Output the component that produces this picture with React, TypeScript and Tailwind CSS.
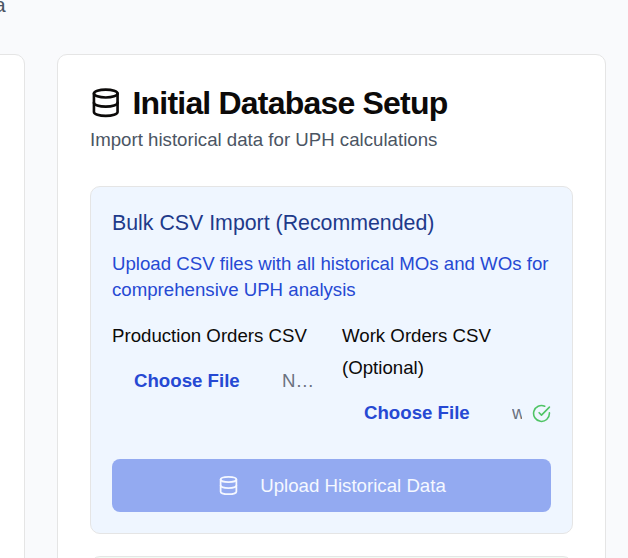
import { Database } from "lucide-react";

function FileField({ name }: { name: string }) {
  return (
    <div className="flex h-[52px] min-w-0 flex-1 items-center overflow-hidden whitespace-nowrap pl-[22px] text-[18.67px]">
      <span className="w-[148px] shrink-0 font-bold text-[#2649d3]">Choose File</span>
      <span className="min-w-0 overflow-hidden text-[#6b7280]">{name}</span>
    </div>
  );
}

function CheckedCircle() {
  return (
    <svg
      viewBox="0 0 24 24"
      fill="none"
      stroke="currentColor"
      strokeWidth="2"
      strokeLinecap="round"
      strokeLinejoin="round"
      className="size-[19px] shrink-0 text-[#4fc465]"
    >
      <path d="M22 11.08V12a10 10 0 1 1-5.93-9.14" />
      <path d="m9 11 3 3L22 4" />
    </svg>
  );
}

export default function App() {
  return (
    <div className="flex h-[558px] w-[628px] flex-col overflow-hidden bg-[#f9fafc] font-['Liberation_Sans',Arial,sans-serif] text-[18.67px] text-[#0c0a09]">
      <div className="h-[54px] shrink-0 text-[21px] leading-[26px] text-[#4b5563]">
        <p className="-mt-[8px] -ml-[6px]">a</p>
      </div>
      <main className="flex h-[700px] shrink-0 gap-8">
        <section className="-ml-3 w-[37px] shrink-0 rounded-[10px] border border-[#e5e5e5] bg-white shadow-2xs" />
        <section className="w-[549px] shrink-0 rounded-[10px] border border-[#e5e5e5] bg-white px-8 pt-[31px] shadow-2xs">
          <header>
            <h1 className="flex h-[33px] items-center gap-[11px] whitespace-nowrap text-[32px] font-bold tracking-[-0.8px]">
              <Database size={31.5} strokeWidth={2} className="shrink-0" />
              <span>Initial Database Setup</span>
            </h1>
            <p className="mt-[8px] leading-[26px] text-[#4b5563]">Import historical data for UPH calculations</p>
          </header>
          <div className="mt-[33px] h-[348px] rounded-[10px] border border-[#e5e5e5] bg-[#eff6ff] px-[21px] pt-[21px]">
            <h2 className="text-[21.33px] leading-[31px] text-[#1e3a8a]">Bulk CSV Import (Recommended)</h2>
            <p className="mt-[12px] whitespace-nowrap leading-[26px] text-[#2649d3]">
              Upload CSV files with all historical MOs and WOs for
              <br />
              comprehensive UPH analysis
            </p>
            <div className="mt-[17px] grid grid-cols-2 gap-[21px]">
              <div>
                <label className="block whitespace-nowrap leading-8">Production Orders CSV</label>
                <div className="mt-[3px] flex">
                  <FileField name="N…" />
                </div>
              </div>
              <div>
                <label className="block leading-8">
                  Work Orders CSV
                  <br />
                  (Optional)
                </label>
                <div className="mt-[3px] flex items-center gap-[10px]">
                  <FileField name="work_orders.csv" />
                  <CheckedCircle />
                </div>
              </div>
            </div>
            <button className="mt-[20px] flex h-[53px] w-full items-center justify-center gap-[21px] rounded-[8px] bg-[#93aaf1] pl-px text-[#f5f8ff]">
              <Database size={21} strokeWidth={2} />
              <span>Upload Historical Data</span>
            </button>
          </div>
          <div className="mt-[22px] h-[120px] rounded-[10px] border border-[#e5e5e5] bg-[#f0fdf4]" />
        </section>
      </main>
    </div>
  );
}
